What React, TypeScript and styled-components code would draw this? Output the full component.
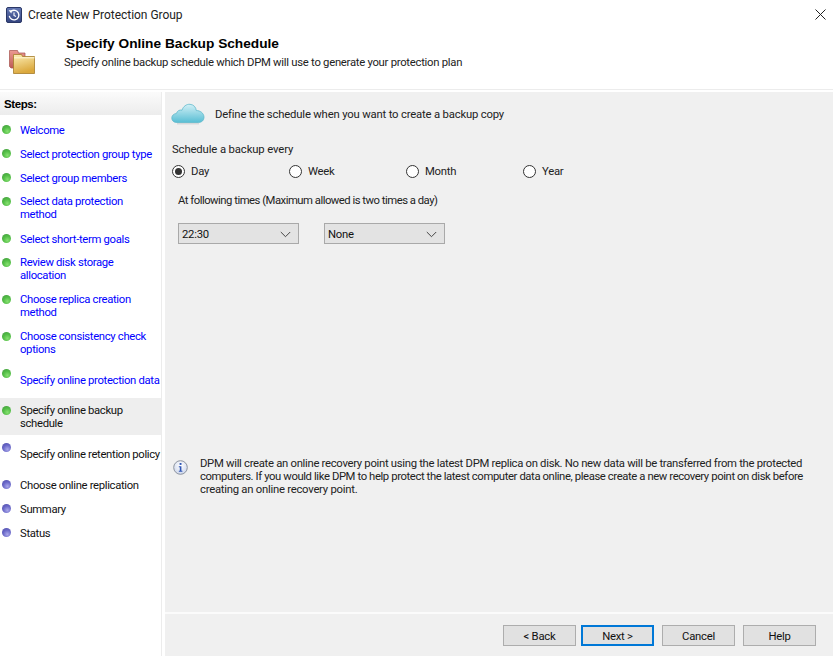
import React from 'react'
import styled, { createGlobalStyle } from 'styled-components'

const GlobalStyle = createGlobalStyle`
  html, body, #root {
    margin: 0;
    height: 100%;
    overflow: hidden;
  }
  body {
    background: #fff;
    color: #000;
    font-family: Roboto, "Liberation Sans", sans-serif;
    font-size: 11.3px;
    letter-spacing: -0.25px;
  }
`

const Window = styled.div`
  height: 656px;
  display: flex;
  flex-direction: column;
`

const TitleBar = styled.div`
  height: 29px;
  padding-left: 6px;
  padding-right: 7px;
  display: flex;
  align-items: center;
  gap: 6px;
  color: #222;
  font-size: 12px;
  letter-spacing: -0.03px;
`

const TitleText = styled.span`
  flex: 1;
`

const Header = styled.div`
  height: 60px;
  display: flex;
  border-bottom: 1px solid #ececec;
  box-sizing: content-box;
`

const FolderBox = styled.div`
  width: 64px;
  padding: 21px 0 0 9px;
  box-sizing: border-box;
`

const HeaderText = styled.div`
  padding-top: 7px;
`

const HeaderTitle = styled.div`
  font-family: "Liberation Sans", Arial, sans-serif;
  font-weight: 700;
  font-size: 13.7px;
  letter-spacing: 0;
  line-height: 16px;
  margin-left: 2px;
`

const HeaderSub = styled.div`
  line-height: 16px;
  margin-top: 3px;
  color: #222;
  letter-spacing: -0.27px;
`

const Body = styled.div`
  flex: 1;
  display: flex;
  min-height: 0;
  padding-top: 2px;
`

const Sidebar = styled.nav`
  flex: none;
  width: 161px;
  margin-right: 3px;
  border-right: 1px solid #ececec;
  box-sizing: content-box;
`

const StepsHeader = styled.div`
  height: 23px;
  padding-left: 4px;
  display: flex;
  align-items: center;
  font-family: "Liberation Sans", Arial, sans-serif;
  font-weight: 700;
  font-size: 11.5px;
  letter-spacing: -0.4px;
  background: linear-gradient(#fbfbfb, #ececec);
`

const StepList = styled.ul`
  list-style: none;
  margin: 3px 0 0;
  padding: 0;
  letter-spacing: -0.33px;
`

const Step = styled.li<{ $height: number; $current?: boolean }>`
  height: ${(p) => p.$height}px;
  padding-left: 20px;
  display: flex;
  align-items: center;
  position: relative;
  line-height: 13px;
  background: ${(p) => (p.$current ? '#eeeeee' : 'transparent')};
  white-space: nowrap;
`

const StepLabel = styled.span<{ $state: StepState; $raised?: boolean }>`
  color: ${(p) => (p.$state === 'done' ? '#0000ff' : '#111')};
  margin-bottom: ${(p) => (p.$raised ? 2 : 0)}px;
`

const Bullet = styled.i<{ $done: boolean; $low?: boolean }>`
  position: absolute;
  left: 2px;
  top: ${(p) => (p.$low ? 8 : 7)}px;
  width: 9px;
  height: 9px;
  border-radius: 50%;
  background: ${(p) =>
    p.$done
      ? 'radial-gradient(circle at 60% 70%, #86e070 0%, #55bf48 45%, #3f973c 100%)'
      : 'radial-gradient(circle at 60% 70%, #a9a8ea 0%, #6a68c8 50%, #4d4ba6 100%)'};
`

const Main = styled.main`
  flex: 1;
  min-width: 0;
  background: #f0f0f0;
  display: flex;
  flex-direction: column;
`

const Content = styled.div`
  flex: 1;
  padding: 10px 6px 0;
  display: flex;
  flex-direction: column;
`

const Intro = styled.div`
  display: flex;
  align-items: center;
  gap: 10px;
  height: 24px;
  color: #222;
  letter-spacing: -0.18px;
`

const ScheduleLabel = styled.div`
  margin: 17px 0 0 1px;
  line-height: 14px;
  color: #222;
  letter-spacing: -0.12px;
`

const RadioRow = styled.div`
  display: flex;
  margin-top: 5px;
  margin-left: 1px;
`

const RadioItem = styled.label`
  width: 117px;
  display: flex;
  align-items: center;
  gap: 6px;
  height: 18px;
  color: #222;
`

const RadioCircle = styled.span<{ $on?: boolean }>`
  width: 13px;
  height: 13px;
  border: 1px solid #333;
  border-radius: 50%;
  box-sizing: border-box;
  background: #fff;
  display: flex;
  align-items: center;
  justify-content: center;
  &::after {
    content: '';
    width: 7px;
    height: 7px;
    border-radius: 50%;
    background: ${(p) => (p.$on ? '#333' : 'transparent')};
  }
`

const TimesLabel = styled.div`
  margin: 14px 0 0 7px;
  line-height: 14px;
  color: #222;
  letter-spacing: -0.5px;
`

const SelectRow = styled.div`
  display: flex;
  gap: 25px;
  margin-top: 15px;
  margin-left: 7px;
`

const Select = styled.div`
  width: 121px;
  height: 21px;
  box-sizing: border-box;
  border: 1px solid #a9a9a9;
  background: #e3e3e3;
  padding: 1px 7px 0 3px;
  display: flex;
  align-items: center;
  justify-content: space-between;
  color: #111;
`

const InfoRow = styled.div`
  margin-top: auto;
  margin-bottom: 116px;
  margin-left: 2px;
  display: flex;
  gap: 12px;
`

const InfoText = styled.div`
  line-height: 13px;
  color: #222;
  white-space: nowrap;
`

const InfoLine = styled.div<{ $spacing: number }>`
  letter-spacing: ${(p) => p.$spacing}px;
`

const InfoIconBox = styled.div`
  padding-top: 3px;
`

const Footer = styled.footer`
  height: 44px;
  border-top: 2px solid #fbfbfb;
  box-sizing: border-box;
  padding: 11px 17px 0 0;
  display: flex;
  justify-content: flex-end;
  gap: 8px;
`

const Button = styled.button<{ $primary?: boolean; $tight?: boolean }>`
  width: 73px;
  height: 21px;
  padding: 1px 0 0;
  margin-right: ${(p) => (p.$tight ? -3 : 0)}px;
  box-sizing: border-box;
  font: inherit;
  letter-spacing: inherit;
  color: #111;
  background: #e1e1e1;
  border: ${(p) => (p.$primary ? '2px solid #0078d7' : '1px solid #adadad')};
`

const ClockIcon = () => (
  <svg width="16" height="16" viewBox="0 0 16 16">
    <defs>
      <linearGradient id="clk" x1="0" y1="0" x2="0" y2="1">
        <stop offset="0" stopColor="#6478b4" />
        <stop offset="1" stopColor="#34447f" />
      </linearGradient>
    </defs>
    <rect x="0.5" y="0.5" width="15" height="15" rx="1.5" fill="url(#clk)" stroke="#2b3866" />
    <path d="M5.200 4.200A4.800 4.800 0 1 1 3.300 8.800" fill="none" stroke="#fff" strokeWidth="1.3" />
    <path d="M2.600 3.200l3.600.1-.9 3.100z" fill="#fff" />
    <path d="M8 5.500V8.500l2 1.100" fill="none" stroke="#fff" strokeWidth="1.1" />
  </svg>
)

const CloseIcon = () => (
  <svg width="11" height="11" viewBox="0 0 11 11">
    <path d="M.5.5l10 10M10.500.5l-10 10" stroke="#222" strokeWidth="1" fill="none" />
  </svg>
)

const FolderIcon = () => (
  <svg width="26" height="24" viewBox="0 0 26 24">
    <defs>
      <linearGradient id="fold" x1="0" y1="0" x2="0.3" y2="1">
        <stop offset="0" stopColor="#fdf0b8" />
        <stop offset="1" stopColor="#dba83c" />
      </linearGradient>
      <linearGradient id="foldr" x1="0" y1="0" x2="0" y2="1">
        <stop offset="0" stopColor="#ec9a92" />
        <stop offset="1" stopColor="#bd5a54" />
      </linearGradient>
    </defs>
    <path d="M.5.5h8l1 2.500h6.500v15H2L.5 16.500z" fill="url(#foldr)" stroke="#a5524e" strokeWidth="0.7" />
    <path d="M4.500 4.500h8l1 2h12v17H4.500z" fill="url(#fold)" stroke="#a67c2a" strokeWidth="0.8" />
    <path d="M5 7.800h20.500" stroke="#fff8d8" strokeWidth="1" />
  </svg>
)

const CloudIcon = () => (
  <svg width="34" height="22" viewBox="0 0 34 22">
    <defs>
      <linearGradient id="cloud" x1="0" y1="0" x2="0" y2="1">
        <stop offset="0" stopColor="#d2f0f6" />
        <stop offset="1" stopColor="#58bed4" />
      </linearGradient>
    </defs>
    <path
      d="M6 19.500C2.500 19.500.8 17.400.8 15c0-2.500 2-4.300 4.600-4.500C6.200 7.800 8.600 6.500 11 7.200 12.200 3.400 15.500 1 19 1.300c3.700.3 6 3 6.300 6.300 3.700-.2 7.700 2.500 7.700 6.700 0 3-2.300 5.200-5.300 5.200z"
      fill="url(#cloud)"
      stroke="#5fb9cc"
      strokeWidth="0.8"
    />
    <path d="M6 20.800h22" stroke="#c9ced0" strokeWidth="1" />
  </svg>
)

const InfoIcon = () => (
  <svg width="15" height="15" viewBox="0 0 15 15">
    <defs>
      <radialGradient id="inf" cx="0.5" cy="0.35" r="0.7">
        <stop offset="0" stopColor="#ffffff" />
        <stop offset="1" stopColor="#c9d3ea" />
      </radialGradient>
    </defs>
    <circle cx="7.500" cy="7.500" r="6.800" fill="url(#inf)" stroke="#8d949f" />
    <rect x="6.600" y="3" width="1.900" height="1.900" fill="#2f56b5" />
    <path d="M5.800 6.200h2.600v4.500h1v1H5.800v-1h1V7.200h-1z" fill="#2f56b5" />
  </svg>
)

const Chevron = () => (
  <svg width="11" height="7" viewBox="0 0 11 7">
    <path d="M.8 1l4.700 4.700L10.200 1" fill="none" stroke="#444" strokeWidth="1" />
  </svg>
)

type StepState = 'done' | 'current' | 'todo'

type StepItem = {
  label: React.ReactNode
  height: number
  state: StepState
  raised?: boolean
  low?: boolean
}

const steps: StepItem[] = [
  { label: 'Welcome', height: 24, state: 'done' },
  { label: 'Select protection group type', height: 24, state: 'done' },
  { label: 'Select group members', height: 24, state: 'done' },
  { label: <>Select data protection<br />method</>, height: 37, state: 'done', raised: true },
  { label: 'Select short-term goals', height: 24, state: 'done' },
  { label: <>Review disk storage<br />allocation</>, height: 37, state: 'done', raised: true },
  { label: <>Choose replica creation<br />method</>, height: 37, state: 'done', raised: true },
  { label: <>Choose consistency check<br />options</>, height: 37, state: 'done', raised: true },
  { label: 'Specify online protection data', height: 36, state: 'done' },
  { label: <>Specify online backup<br />schedule</>, height: 37, state: 'current', low: true },
  { label: 'Specify online retention policy', height: 38, state: 'todo', low: true },
  { label: 'Choose online replication', height: 24, state: 'todo' },
  { label: 'Summary', height: 24, state: 'todo' },
  { label: 'Status', height: 24, state: 'todo' },
]

const periods = ['Day', 'Week', 'Month', 'Year']

const App = () => (
  <Window>
    <GlobalStyle />
    <TitleBar>
      <ClockIcon />
      <TitleText>Create New Protection Group</TitleText>
      <CloseIcon />
    </TitleBar>
    <Header>
      <FolderBox>
        <FolderIcon />
      </FolderBox>
      <HeaderText>
        <HeaderTitle>Specify Online Backup Schedule</HeaderTitle>
        <HeaderSub>Specify online backup schedule which DPM will use to generate your protection plan</HeaderSub>
      </HeaderText>
    </Header>
    <Body>
      <Sidebar>
        <StepsHeader>Steps:</StepsHeader>
        <StepList>
          {steps.map((step, i) => (
            <Step key={i} $height={step.height} $current={step.state === 'current'}>
              <Bullet $done={step.state !== 'todo'} $low={step.low} />
              <StepLabel $state={step.state} $raised={step.raised}>
                {step.label}
              </StepLabel>
            </Step>
          ))}
        </StepList>
      </Sidebar>
      <Main>
        <Content>
          <Intro>
            <CloudIcon />
            <span>Define the schedule when you want to create a backup copy</span>
          </Intro>
          <ScheduleLabel>Schedule a backup every</ScheduleLabel>
          <RadioRow>
            {periods.map((period, i) => (
              <RadioItem key={period}>
                <RadioCircle $on={i === 0} />
                {period}
              </RadioItem>
            ))}
          </RadioRow>
          <TimesLabel>At following times (Maximum allowed is two times a day)</TimesLabel>
          <SelectRow>
            <Select>
              22:30
              <Chevron />
            </Select>
            <Select>
              None
              <Chevron />
            </Select>
          </SelectRow>
          <InfoRow>
            <InfoIconBox>
              <InfoIcon />
            </InfoIconBox>
            <InfoText>
              <InfoLine $spacing={-0.3}>
                DPM will create an online recovery point using the latest DPM replica on disk. No new data will be transferred from the protected
              </InfoLine>
              <InfoLine $spacing={-0.4}>
                computers. If you would like DPM to help protect the latest computer data online, please create a new recovery point on disk before
              </InfoLine>
              <InfoLine $spacing={-0.25}>creating an online recovery point.</InfoLine>
            </InfoText>
          </InfoRow>
        </Content>
        <Footer>
          <Button $tight>&lt; Back</Button>
          <Button $primary>Next &gt;</Button>
          <Button>Cancel</Button>
          <Button>Help</Button>
        </Footer>
      </Main>
    </Body>
  </Window>
)

export default App
